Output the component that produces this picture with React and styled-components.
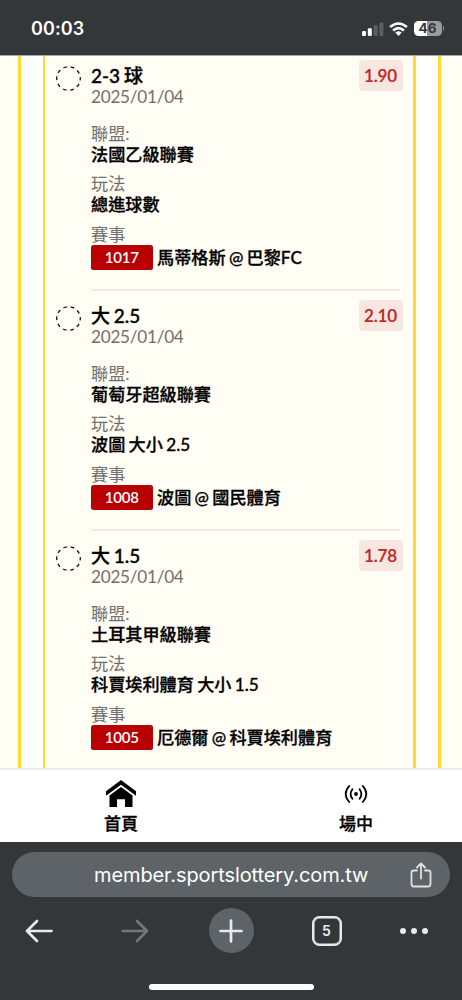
import React from "react";
import styled, { createGlobalStyle } from "styled-components";

const Global = createGlobalStyle`
  * { box-sizing: border-box; }
  body { margin: 0; background: #33373a; }
`;

const Screen = styled.div`
  width: 462px;
  height: 1000px;
  display: flex;
  flex-direction: column;
  overflow: hidden;
  background: #33373a;
  font-family: Lato, "Noto Sans CJK TC", sans-serif;
`;

const StatusBar = styled.header`
  height: 55px;
  flex: none;
  display: flex;
  align-items: center;
  justify-content: space-between;
  padding: 2px 18px 0 31px;
  color: #fff;
`;

const Clock = styled.span`
  font: 600 18px/22px Inter, sans-serif;
  letter-spacing: 0.1px;
`;

const StatusIcons = styled.div`
  display: flex;
  align-items: center;
  gap: 5px;
`;

const Battery = styled.div`
  display: flex;
  align-items: center;
  gap: 1px;
  margin-left: 1px;
`;

const BatteryBody = styled.div`
  width: 28px;
  height: 15px;
  border-radius: 4.5px;
  background: linear-gradient(90deg, #fff 46%, #999b9c 46%);
  color: #33373a;
  font: 700 13.5px/15px Inter, sans-serif;
  text-align: center;
`;

const BatteryCap = styled.div`
  width: 1.5px;
  height: 5px;
  border-radius: 0 2px 2px 0;
  background: #85888a;
`;

const Page = styled.main`
  height: 713px;
  flex: none;
  border-top: 1px solid #a5a7a3;
  padding: 0 21px 0 18px;
  background: #fffdf4;
  overflow: hidden;
`;

const Ticket = styled.div`
  height: 100%;
  border: solid #ffda33;
  border-width: 0 3px;
  padding: 0 22px;
  background: #fff;
`;

const Slip = styled.div`
  height: 100%;
  border: solid #ffda33;
  border-width: 0 3px 0 2px;
  padding: 0 10.5px 0 11px;
  background: #fffdf4;
`;

const Bet = styled.section`
  height: ${(p) => (p.$first ? 235 : 240)}px;
  padding-top: ${(p) => (p.$first ? 4 : 9)}px;
  display: flex;
  align-items: flex-start;
`;

const Ring = styled.svg`
  flex: none;
  margin: 6px 10px 0 0;
`;

const BetBody = styled.div`
  flex: 1;
  height: 231px;
  margin-right: 2.5px;
  border-bottom: ${(p) => (p.$last ? "none" : "2px solid #efede6")};
`;

const BetHead = styled.div`
  height: 62.5px;
  margin-right: -2.5px;
  display: flex;
  justify-content: space-between;
  align-items: flex-start;
`;

const Heading = styled.div`
  padding-top: 5px;
`;

const Title = styled.h2`
  margin: 0;
  font-size: 19px;
  line-height: 21px;
  font-weight: 500;
  -webkit-text-stroke: 0.35px #000;
  word-spacing: -1px;
  color: #000;
`;

const Muted = styled.div`
  font-size: 17.15px;
  line-height: 21px;
  color: #707070;
`;

const DateText = styled(Muted)`
  letter-spacing: -0.25px;
`;

const Odds = styled.div`
  width: 44px;
  height: 31px;
  border-radius: 4px;
  background: #f8e7e0;
  color: #bd281f;
  font-size: 17px;
  font-weight: 600;
  -webkit-text-stroke: 0.2px #bd281f;
  letter-spacing: -0.2px;
  line-height: 32px;
  text-align: center;
`;

const Field = styled.div`
  margin-bottom: 8.6px;
`;

const Value = styled.div`
  display: flex;
  align-items: center;
  gap: 4.5px;
  font-size: 17.15px;
  line-height: 21px;
  color: #000;
`;

const MatchValue = styled(Value)`
  padding-top: 0.6px;
`;

const Text = styled.span`
  font-weight: 500;
  -webkit-text-stroke: 0.3px #000;
  word-spacing: -1px;
  white-space: pre;
`;

const Code = styled.span`
  width: 61.5px;
  height: 25px;
  border-radius: 2.5px;
  background: #b80000;
  color: #fff;
  font-size: 15px;
  font-weight: 600;
  letter-spacing: -0.2px;
  line-height: 25px;
  text-align: center;
`;

const TabBar = styled.nav`
  height: 74px;
  flex: none;
  display: flex;
  justify-content: space-between;
  padding: 0 71px;
  border-top: 2px solid #ececea;
  background: #fff;
`;

const Tab = styled.div`
  width: 100px;
  margin: 0 ${(p) => p.$right || 0}px 0 0;
  display: flex;
  flex-direction: column;
  align-items: center;
  font-size: 17px;
  font-weight: 500;
  -webkit-text-stroke: 0.3px #000;
  line-height: 22px;
`;

const TabIcon = styled.div`
  height: 43px;
  display: flex;
  align-items: center;
  padding-top: 4px;
`;

const Browser = styled.footer`
  flex: 1;
  display: flex;
  flex-direction: column;
  align-items: center;
  padding: 10px 12px 0;
`;

const Address = styled.div`
  width: 438px;
  height: 45px;
  border-radius: 23px;
  display: flex;
  align-items: center;
  justify-content: space-between;
  padding: 0 18px 0 82px;
  background: #5e6367;
  color: #fff;
  font: 400 20px/44px Inter, sans-serif;
`;

const Url = styled.span`
  letter-spacing: -0.1px;
`;

const Controls = styled.div`
  width: 438px;
  height: 67px;
  display: grid;
  grid-template-columns: 54px 138px 54px 137px 37px;
  justify-items: center;
  align-items: center;
`;

const NewTab = styled.div`
  width: 45px;
  height: 45px;
  border-radius: 50%;
  background: #5e6367;
  display: grid;
  place-items: center;
`;

const TabCount = styled.div`
  width: 30px;
  height: 30px;
  border: 2px solid #e8eaed;
  box-shadow: inset 0 0 0 0.5px #e8eaed;
  border-radius: 7.5px;
  color: #e8eaed;
  font: 600 14px/26px Inter, sans-serif;
  text-align: center;
`;

const HomeIndicator = styled.div`
  width: 165px;
  height: 6px;
  margin-top: 20px;
  border-radius: 3px;
  background: #fff;
`;

const bets = [
  { title: "2-3 球", odds: "1.90", league: "法國乙級聯賽", play: "總進球數", code: "1017", match: "馬蒂格斯 @ 巴黎FC" },
  { title: "大 2.5", odds: "2.10", league: "葡萄牙超級聯賽", play: "波圖 大小 2.5", code: "1008", match: "波圖 @ 國民體育" },
  { title: "大 1.5", odds: "1.78", league: "土耳其甲級聯賽", play: "科賈埃利體育 大小 1.5", code: "1005", match: "厄德爾 @ 科賈埃利體育" },
];

function BetItem({ bet, first, last }) {
  return (
    <Bet $first={first}>
      <Ring width="25" height="25" viewBox="0 0 25 25">
        <circle cx="12.5" cy="12.5" r="11.8" fill="none" stroke="#111" strokeWidth="1.3" strokeDasharray="3.7 3.714" strokeDashoffset="1.85" />
      </Ring>
      <BetBody $last={last}>
        <BetHead>
          <Heading>
            <Title>{bet.title}</Title>
            <DateText>2025/01/04</DateText>
          </Heading>
          <Odds>{bet.odds}</Odds>
        </BetHead>
        <Field>
          <Muted>聯盟:</Muted>
          <Value><Text>{bet.league}</Text></Value>
        </Field>
        <Field>
          <Muted>玩法</Muted>
          <Value><Text>{bet.play}</Text></Value>
        </Field>
        <Field>
          <Muted>賽事</Muted>
          <MatchValue><Code>{bet.code}</Code><Text>{bet.match}</Text></MatchValue>
        </Field>
      </BetBody>
    </Bet>
  );
}

const line = { fill: "none", strokeLinecap: "round", strokeLinejoin: "round" };

export default function App() {
  return (
    <Screen>
      <Global />
      <StatusBar>
        <Clock>00:03</Clock>
        <StatusIcons>
          <svg width="22" height="14" viewBox="0 0 22 14">
            <rect x="0" y="9" width="4" height="5" rx="1.2" fill="#fff" />
            <rect x="5.8" y="6.2" width="4" height="7.8" rx="1.2" fill="#fff" />
            <rect x="11.6" y="3.2" width="4" height="10.8" rx="1.2" fill="#5c5f61" />
            <rect x="17.4" y="0.5" width="4" height="13.5" rx="1.2" fill="#5c5f61" />
          </svg>
          <svg width="19" height="14" viewBox="0 0 19 14">
            <path d="M1.1 5.1Q9.5-2.1 17.9 5.1M4.1 8.4Q9.5 3.7 14.9 8.4" fill="none" stroke="#fff" strokeWidth="2.6" />
            <path d="M6.3 10.6Q9.5 7.9 12.7 10.6L9.5 13.9Z" fill="#fff" />
          </svg>
          <Battery>
            <BatteryBody>46</BatteryBody>
            <BatteryCap />
          </Battery>
        </StatusIcons>
      </StatusBar>
      <Page>
        <Ticket>
          <Slip>
            {bets.map((bet, i) => (
              <BetItem key={bet.code} bet={bet} first={i === 0} last={i === 2} />
            ))}
          </Slip>
        </Ticket>
      </Page>
      <TabBar>
        <Tab>
          <TabIcon>
            <svg width="30" height="28" viewBox="0 0 30 28">
              <path d="M0 11.2L15 0L30 11.2V15.8L15 4.8L0 15.8Z" />
              <path d="M3.5 15.4L15 7L26.5 15.4V27H19V19.3H11V27H3.5Z" />
            </svg>
          </TabIcon>
          首頁
        </Tab>
        <Tab $right={-15}>
          <TabIcon>
            <svg width="24" height="20" viewBox="0 0 24 20" stroke="#000" strokeWidth="1.8" {...line}>
              <circle cx="12" cy="10" r="1.9" fill="#000" stroke="none" />
              <path d="M8.4 5.2Q4.8 10 8.4 14.8M15.6 5.2Q19.2 10 15.6 14.8M5.2 2Q-1.8 10 5.2 18M18.8 2Q25.8 10 18.8 18" />
            </svg>
          </TabIcon>
          場中
        </Tab>
      </TabBar>
      <Browser>
        <Address>
          <Url>member.sportslottery.com.tw</Url>
          <svg width="22" height="26" viewBox="0 0 22 26" stroke="#dfe1e4" strokeWidth="1.8" {...line}>
            <path d="M7 8.5H3.5Q1.5 8.5 1.5 10.5V22Q1.5 24.5 4 24.5H18Q20.5 24.5 20.5 22V10.5Q20.5 8.5 18.5 8.5H15M11 16.5V1.5M7 5.5L11 1.5L15 5.5" />
          </svg>
        </Address>
        <Controls>
          <svg width="28" height="24" viewBox="0 0 28 24" stroke="#e8eaed" strokeWidth="2.7" {...line}>
            <path d="M26.5 12H2M12 2L2 12L12 22" />
          </svg>
          <svg width="28" height="24" viewBox="0 0 28 24" stroke="#74777a" strokeWidth="2.7" {...line}>
            <path d="M1.5 12H26M16 2L26 12L16 22" />
          </svg>
          <NewTab>
            <svg width="24" height="24" viewBox="0 0 24 24" stroke="#e8eaed" strokeWidth="2.7" {...line}>
              <path d="M1.5 12H22.5M12 1.5V22.5" />
            </svg>
          </NewTab>
          <TabCount>5</TabCount>
          <svg width="28" height="6" viewBox="0 0 28 6" fill="#e8eaed">
            <circle cx="3" cy="3" r="3" /><circle cx="14" cy="3" r="3" /><circle cx="25" cy="3" r="3" />
          </svg>
        </Controls>
        <HomeIndicator />
      </Browser>
    </Screen>
  );
}
